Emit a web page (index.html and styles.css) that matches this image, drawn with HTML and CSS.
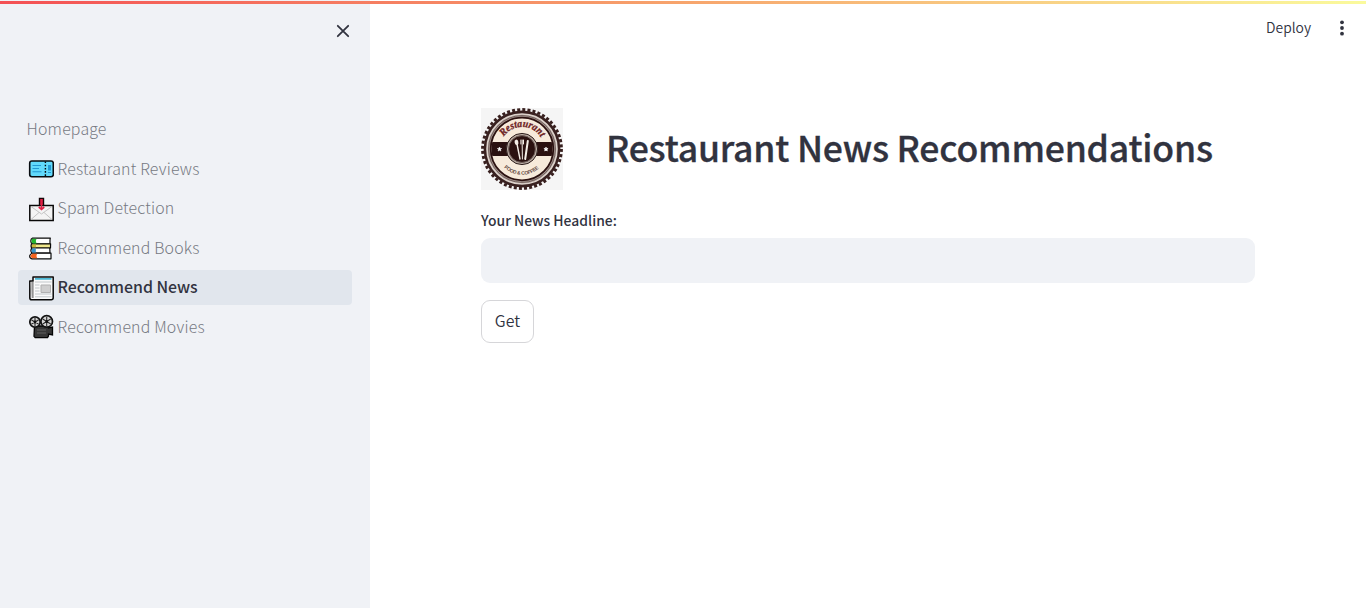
FILE: index.html
```html
<!DOCTYPE html>
<html lang="en">
<head>
<meta charset="utf-8">
<title>Restaurant News Recommendations</title>
<link rel="stylesheet" href="styles.css">
</head>
<body>
<div class="decoration"></div>
<div class="app">
  <aside class="sidebar">
    <div class="sidebar-head">
      <button class="icon-button" aria-label="Close sidebar">
        <svg width="14" height="14" viewBox="0 0 14 14"><path d="M1.8 1.8 12.2 12.2M12.2 1.8 1.8 12.2" fill="none" stroke="#31333f" stroke-width="1.8" stroke-linecap="round"/></svg>
      </button>
    </div>
    <nav class="nav">
      <a class="nav-item"><span>Homepage</span></a>
      <a class="nav-item">
        <svg class="emoji" viewBox="0 0 26 26"><rect x="1.7" y="5" width="23.6" height="15.8" rx="2.2" fill="#61d9fb" stroke="#080c10" stroke-width="1.6"/><path d="M4.5 9.5H13M4.5 12.5H11M4.5 15.7H13.5" stroke="#2398d2" stroke-width="1.1"/><path d="M20 9h3v5.5h-3zM20 16h3v1h-3z" fill="#2398d2"/><path d="M17.4 5.5v15" stroke="#080c10" stroke-width="1.4" stroke-dasharray="1.6 1.6"/></svg>
        <span>Restaurant Reviews</span></a>
      <a class="nav-item">
        <svg class="emoji" viewBox="0 0 26 26"><path d="M1.8 9.5h23.4v15H1.8z" fill="#f4f4f4" stroke="#080808" stroke-width="1.5"/><path d="M3 10.5 13.5 18 24 10.5M3 23.5l8-7M24 23.5l-8-7" fill="none" stroke="#c4c4c4"/><path d="M11.5 9V2.4h4V9" fill="#d61f42" stroke="#120506" stroke-width="1.4"/><path d="M13.5 3v10" stroke="#df2146" stroke-width="1.5"/><path d="m10.8 11 2.7 2.4 2.7-2.4" fill="none" stroke="#df2146" stroke-width="1.8"/></svg>
        <span>Spam Detection</span></a>
      <a class="nav-item">
        <svg class="emoji" viewBox="0 0 26 26"><g stroke="#090909" stroke-width="1.2" stroke-linejoin="round"><path d="M22.3 3.2H4.5Q2.8 3.7 2.8 6t1.7 3H22V5z" fill="#fff"/><path d="M22.6 8.8H3.5Q2.6 10.8 3.5 13h19z" fill="#f0e78b"/><path d="M21.8 13H4q-2.2 2.7 0 5.2h18z" fill="#fff"/><path d="M23 18.2H4Q1.7 19.2 1.7 21.3T4 23.8h19z" fill="#fff"/></g><path d="M4 3.8h4.5q-1.4 2.3 0 4.6H5Q3.3 8 3.5 6z" fill="#24b62f"/><path d="M4 13.6h3.8v4H4.2Q3 16 4 13.6z" fill="#3994cc"/><path d="M4.3 18.8h5q-1.6 2 0 4.4H4.4Q2.3 22 2.5 20.7z" fill="#f4631f"/><path d="M4 9.5h4v2.8H4z" fill="#c9bb39"/></svg>
        <span>Recommend Books</span></a>
      <a class="nav-item active">
        <svg class="emoji" viewBox="0 0 26 26"><path d="M5 6H1.8v17q0 1.8 2 1.8h19.4q2 0 2-2V2H5z" fill="#fafafa" stroke="#080808" stroke-width="1.5" stroke-linejoin="round"/><path d="M2.6 7H5v16H3.5z" fill="#bbb"/><path d="M5 6v17" stroke="#555" stroke-width=".8"/><path d="M7 3.9h16.5" stroke="#2aadd0" stroke-width="1.5"/><path d="M7 7h16.5M7 10h4.5M7 13h4.5M7 16h4.5M7 19h16.5M7 21.8h16.5" stroke="#bcc2c5" stroke-width=".9"/><path d="M13 10h9.5v7.5H13z" fill="#cfcfcf" stroke="#b1b1b1"/></svg>
        <span>Recommend News</span></a>
      <a class="nav-item">
        <svg class="emoji" viewBox="0 0 26 26"><path d="M6.5 12h14v2l4-1v8l-4-1v2l-1 1.7H7.2L6 22.3z" fill="#363636" stroke="#050505" stroke-width="1.3"/><circle cx="7" cy="8" r="5.2" fill="#d5d5d5" stroke="#111" stroke-width="1.7"/><circle cx="18.7" cy="7.4" r="5.8" fill="#d5d5d5" stroke="#111" stroke-width="1.7"/><path d="M7 4v8M3.5 6l7 4M3.5 10l7-4M18.7 3v9M14.7 5l8 5M14.7 10l8-5" stroke="#292929" stroke-width="1.1"/><circle cx="7" cy="8" r="1.4" fill="#111"/><circle cx="18.7" cy="7.4" r="1.4" fill="#111"/><path d="M9 16h9M9 19h9" stroke="#606060"/></svg>
        <span>Recommend Movies</span></a>
    </nav>
  </aside>
  <main class="main">
    <header class="toolbar">
      <span class="deploy">Deploy</span>
      <button class="icon-button" aria-label="Menu"><svg width="6" height="16" viewBox="0 0 6 16"><g fill="#31333f"><circle cx="3" cy="2.3" r="1.9"/><circle cx="3" cy="8" r="1.9"/><circle cx="3" cy="13.7" r="1.9"/></g></svg></button>
    </header>
    <section class="content">
      <div class="title-row">
        <svg class="logo" viewBox="0 0 82 82">
          <defs><path id="arc-top" d="M22.6 28.6A22.2 22.2 0 0 1 60.2 30"/><path id="arc-bottom" d="M20.5 56.5A25.6 25.6 0 0 0 61.5 56.5"/><clipPath id="disc"><circle cx="41" cy="41" r="30.5"/></clipPath></defs>
          <rect width="82" height="82" fill="#f5f5f5"/>
          <circle cx="41" cy="41" r="38.4" fill="#38201f"/>
          <circle cx="41" cy="41" r="39.4" fill="none" stroke="#38201f" stroke-width="3" stroke-dasharray="3 2.158"/>
          <circle cx="41" cy="41" r="35" fill="#a99a94" stroke="#ddd3cc" stroke-width="1.6"/>
          <circle cx="41" cy="41" r="33.4" fill="none" stroke="#5a4643" stroke-width=".7"/>
          <circle cx="41" cy="41" r="31.3" fill="#f7eadb" stroke="#2b1110" stroke-width="1.8"/>
          <path d="M10 34h62v14H10z" fill="#2b1110" clip-path="url(#disc)"/>
          <circle cx="41" cy="41" r="15.6" fill="#b8a9a0" stroke="#30201e" stroke-width="1"/>
          <circle cx="41" cy="41" r="13.4" fill="#2b1110" stroke="#71605b" stroke-width="1"/>
          <g fill="none" stroke="#f5eee7" stroke-linecap="round"><path d="M36 36 39 51" stroke-width="1.4"/><path d="M41.2 32v5l.2 14M39.9 32v4M42.5 32v4" stroke-width="1"/><path d="M46.8 33 44.2 51" stroke-width="2"/></g>
          <ellipse cx="35.5" cy="34.3" rx="1.9" ry="2.7" fill="#f5eee7" transform="rotate(-14 35.5 34.3)"/>
          <path id="star" d="m18.5 39 .6 1.4 1.5.1-1.1 1 .3 1.5-1.3-.8-1.3.8.3-1.5-1.1-1 1.5-.1z" fill="#fff" stroke="#fff" stroke-width=".6"/>
          <use href="#star" x="46.5"/>
          <text class="logo-name"><textPath href="#arc-top" textLength="44" lengthAdjust="spacingAndGlyphs">Restaurant</textPath></text>
          <text class="logo-sub"><textPath href="#arc-bottom" startOffset="4" textLength="38">FOOD &amp; COFFEE</textPath></text>
        </svg>
        <h1 class="title">Restaurant News Recommendations</h1>
      </div>
      <label class="label" for="headline">Your News Headline:</label>
      <input class="field" id="headline" type="text">
      <button class="get">Get</button>
    </section>
  </main>
</div>
</body>
</html>
```
FILE: styles.css
```css
* { box-sizing: border-box; }
body {
  margin: 0;
  height: 608px;
  overflow: hidden;
  color: #31333f;
  background: #fff;
  font-family: "Noto Sans CJK SC", "Open Sans", sans-serif;
}
button { font: inherit; color: inherit; }
.decoration {
  position: absolute;
  top: 1px;
  left: 0;
  right: 0;
  height: 3px;
  background: linear-gradient(90deg, #f45054, #f7a46c 50%, #fafa9c);
}
.app { display: flex; height: 100%; }
.sidebar { width: 370px; background: #f0f2f6; flex: none; }
.sidebar-head {
  display: flex;
  justify-content: flex-end;
  padding: 24px 20px 0 0;
  height: 112px;
}
.icon-button {
  display: flex;
  border: 0;
  padding: 0;
  background: none;
  align-self: flex-start;
}
.nav { display: flex; flex-direction: column; gap: 4.5px; padding: 0 18px; }
.nav-item {
  display: flex;
  align-items: center;
  height: 35px;
  padding-left: 8.5px;
  border-radius: 4px;
  font-size: 15.9px;
  line-height: 33px;
  letter-spacing: .18px;
  font-weight: 300;
  color: #767982;
  white-space: nowrap;
}
.nav-item span { padding-bottom: 2px; }
.emoji { width: 26px; height: 26px; margin: 0 3.5px 0 1.5px; flex: none; }
.active {
  background: #e1e6ed;
  color: #31333f;
  font-weight: 500;
  letter-spacing: -.04px;
}
.active .emoji { margin-top: 1px; }
.main { flex: 1; }
.toolbar {
  display: flex;
  justify-content: flex-end;
  align-items: center;
  gap: 28px;
  height: 56px;
  padding-right: 21px;
}
.toolbar .icon-button { align-self: center; }
.deploy { padding-bottom: 2px; font-size: 13.9px; line-height: 20px; font-weight: 350; }
.content { padding: 52px 111px 0; }
.title-row { display: flex; align-items: center; gap: 43px; height: 82px; }
.logo { width: 82px; height: 82px; flex: none; }
.logo-name { font: italic bold 10.5px "Liberation Serif", serif; fill: #6d2223; stroke: #6d2223; stroke-width: .3px; }
.logo-sub { font: bold 5px "Liberation Sans", sans-serif; fill: #624740; }
.title {
  margin: 0;
  padding-bottom: 4px;
  font-size: 35.6px;
  line-height: 48px;
  font-weight: 500;
  letter-spacing: -.23px;
  white-space: nowrap;
  -webkit-text-stroke: .3px #31333f;
}
.label { display: block; margin-top: 20px; font-size: 13.9px; line-height: 20px; font-weight: 500; }
.field {
  display: block;
  width: 774px;
  height: 45px;
  margin-top: 8px;
  border: 0;
  border-radius: 9px;
  background: #f0f2f6;
}
.get {
  display: block;
  width: 53px;
  height: 43px;
  margin-top: 17px;
  padding: 0 0 2px;
  border: 1px solid #d6d6d9;
  border-radius: 9px;
  background: #fff;
  font-size: 15.9px;
  line-height: 39px;
  font-weight: 350;
}
```
